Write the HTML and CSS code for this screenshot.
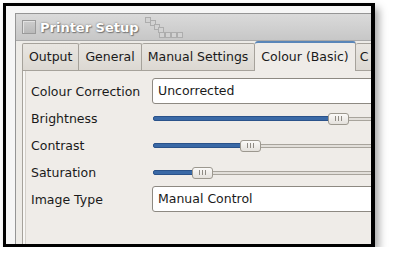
FILE: index.html
```html
<!DOCTYPE html>
<html lang="en">
<head>
    <meta charset="UTF-8">
    <title>Printer Setup</title>
    <link rel="stylesheet" href="styles.css">
</head>
<body>

    <div class="shot">
        <div class="window">
            <div class="titlebar">
                <span class="win-icon"></span>
                <span class="title">Printer Setup</span>
                <svg class="grip" width="40" height="24" viewBox="0 0 40 24">
                    <g fill="#d2d2d2" stroke="#adadad" stroke-width="1">
                        <rect x="0.5" y="0.5" width="5" height="5"/>
                        <rect x="5.5" y="3.5" width="5" height="5"/>
                        <rect x="9.5" y="7.5" width="5" height="5"/>
                        <rect x="13.5" y="10.5" width="5" height="5"/>
                        <rect x="14.5" y="15.5" width="5" height="5"/>
                        <rect x="20.5" y="15.5" width="5" height="5"/>
                        <rect x="26.5" y="15.5" width="5" height="5"/>
                        <rect x="32.5" y="15.5" width="5" height="5"/>
                    </g>
                </svg>
            </div>

            <div class="notebook">
                <div class="tabs">
                    <div class="tab first">Output</div>
                    <div class="tab">General</div>
                    <div class="tab">Manual Settings</div>
                    <div class="tab active">Colour (Basic)</div>
                    <div class="tab more">C</div>
                </div>

                <div class="panel">
                    <div class="form">
                        <div class="label">Colour Correction</div>
                        <div class="combo">Uncorrected</div>

                        <div class="label">Brightness</div>
                        <div class="slider">
                            <span class="fill" style="width: 176px"></span>
                            <span class="thumb"><i></i><i></i><i></i></span>
                            <span class="rest"></span>
                        </div>

                        <div class="label">Contrast</div>
                        <div class="slider">
                            <span class="fill" style="width: 88px"></span>
                            <span class="thumb"><i></i><i></i><i></i></span>
                            <span class="rest"></span>
                        </div>

                        <div class="label">Saturation</div>
                        <div class="slider">
                            <span class="fill" style="width: 40px"></span>
                            <span class="thumb"><i></i><i></i><i></i></span>
                            <span class="rest"></span>
                        </div>

                        <div class="label">Image Type</div>
                        <div class="combo">Manual Control</div>
                    </div>
                </div>
            </div>
        </div>
    </div>

</body>
</html>
```

FILE: styles.css
```css
body {
    margin: 0;
    background-color: #fff;
    font-family: 'DejaVu Sans', sans-serif;
    font-size: 12.5px;
    color: #1a1a1a;
}

.shot {
    box-sizing: border-box;
    width: 372px;
    height: 244px;
    margin: 3px 0 0 3px;
    padding: 7px 0 0 9px;
    border: 3px solid #000;
    border-right-width: 4px;
    background-color: #f6f6f6;
    box-shadow: 4px 5px 8px rgba(0, 0, 0, 0.35);
    overflow: hidden;
}

.window {
    width: 420px;
    height: 260px;
    border: 1px solid #959595;
    background-color: #edebe7;
}

.titlebar {
    height: 26px;
    display: flex;
    align-items: center;
    padding-left: 6px;
    background: linear-gradient(#dadada, #c7c7c7);
    border-bottom: 1px solid #a9a9a9;
}

.win-icon {
    box-sizing: border-box;
    width: 14px;
    height: 14px;
    border: 1px solid #9a9a9a;
    background: linear-gradient(#cdcdcd, #b9b9b9);
    box-shadow: inset 1px 1px 0 #e2e2e2;
}

.title {
    margin-left: 4px;
    font-size: 13px;
    font-weight: bold;
    color: #fff;
    text-shadow: 0 0 2px #6a6a6a, 1px 1px 1px #7a7a7a;
}

.grip {
    margin-left: 6px;
    margin-top: 4px;
}

.notebook {
    padding-left: 6px;
}

.tabs {
    display: flex;
    align-items: flex-end;
    height: 29px;
}

.tab {
    box-sizing: border-box;
    height: 27px;
    padding: 0 6px;
    line-height: 26px;
    white-space: nowrap;
    background: linear-gradient(#e9e6e1, #dcd8d2);
    border: 1px solid #a6a29b;
    border-left: none;
    border-bottom: none;
    border-radius: 2px 2px 0 0;
}

.tab.first {
    border-left: 1px solid #a6a29b;
}

.tab.more {
    width: 40px;
    padding-left: 4px;
}

.tab.active {
    height: 30px;
    line-height: 28px;
    background: #efece8;
    border-top: 2px solid #5a86b8;
    border-radius: 3px 3px 0 0;
    position: relative;
    top: 1px;
}

.panel {
    height: 200px;
    border: 1px solid #a6a29b;
    border-right: none;
    background-color: #efece8;
    box-shadow: inset 2px 0 0 #f8f7f5, inset 3px 0 0 #d3cfc9;
    padding: 7px 0 0 8px;
}

.form {
    display: grid;
    grid-template-columns: 121px 300px;
    grid-auto-rows: 27px;
    align-items: center;
}

.label {
    white-space: nowrap;
}

.combo {
    box-sizing: border-box;
    height: 26px;
    align-self: start;
    padding-left: 5px;
    line-height: 24px;
    background-color: #fff;
    border: 1px solid #8d8982;
    border-radius: 3px 0 0 3px;
}

.slider {
    display: flex;
    align-items: center;
    margin-left: 1px;
}

.fill {
    box-sizing: border-box;
    height: 5px;
    margin-right: -1px;
    background-color: #3a69a6;
    border: 1px solid #2a528a;
    border-radius: 2px 0 0 2px;
}

.thumb {
    box-sizing: border-box;
    width: 21px;
    height: 12px;
    display: flex;
    justify-content: center;
    align-items: center;
    gap: 2px;
    background: linear-gradient(#fbfaf8, #e4e1dc);
    border: 1px solid #9c988f;
    border-radius: 3px;
    position: relative;
    z-index: 1;
}

.thumb i {
    width: 1px;
    height: 5px;
    background-color: #8f8b84;
}

.rest {
    flex: 1;
    box-sizing: border-box;
    height: 4px;
    margin-left: -1px;
    background-color: #e2dfda;
    border-top: 1px solid #a8a49c;
    border-bottom: 1px solid #a8a49c;
}
```
